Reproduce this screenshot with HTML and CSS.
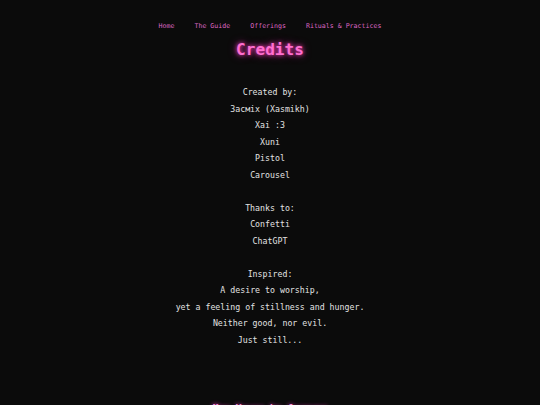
FILE: index.html
```
<!DOCTYPE html>
<html>
<head>
<meta charset="utf-8">
<link rel="stylesheet" href="styles.css">
</head>
<body>
<nav class="nav">
  <a href="#">Home</a>
  <a href="#">The Guide</a>
  <a href="#">Offerings</a>
  <a href="#">Rituals &amp; Practices</a>
</nav>
<h1 class="title">Credits</h1>
<main class="credits">
  <p>Created by:</p>
  <p>Засміх (Xasmikh)</p>
  <p>Xai :3</p>
  <p>Xuni</p>
  <p>Pistol</p>
  <p>Carousel</p>
  <p class="blank">&nbsp;</p>
  <p>Thanks to:</p>
  <p>Confetti</p>
  <p>ChatGPT</p>
  <p class="blank">&nbsp;</p>
  <p>Inspired:</p>
  <p>A desire to worship,</p>
  <p>yet a feeling of stillness and hunger.</p>
  <p>Neither good, nor evil.</p>
  <p>Just still...</p>
</main>
<footer class="footer">May Yours be forever</footer>
</body>
</html>
```
FILE: styles.css
```
html, body {
  margin: 0;
  padding: 0;
  background: #0b0b0b;
}
body {
  font-family: "DejaVu Sans Mono", monospace;
  color: #e2e2e2;
  height: 405px;
  overflow: hidden;
}
.nav {
  display: flex;
  justify-content: center;
  gap: 20px;
  padding-top: 21px;
  height: 10px;
  line-height: 10px;
  font-size: 6.6px;
}
.nav a {
  color: #dc66c2;
  text-decoration: none;
}
.title {
  margin: 0;
  margin-top: 7px;
  text-align: center;
  font-size: 16.1px;
  line-height: 24px;
  font-weight: bold;
  color: #ff6fd0;
  text-shadow: 0 0 4px #ff3cc0, 0 0 8px rgba(255, 60, 190, 0.6);
}
.credits {
  margin-top: 22px;
  text-align: center;
  font-size: 8.25px;
  line-height: 16.5px;
}
.credits p {
  margin: 0;
}
.footer {
  margin-top: 54px;
  text-align: center;
  font-size: 9.5px;
  font-weight: bold;
  color: #f08ad6;
  text-shadow: 0 0 4px #ff3cc0;
}
```
